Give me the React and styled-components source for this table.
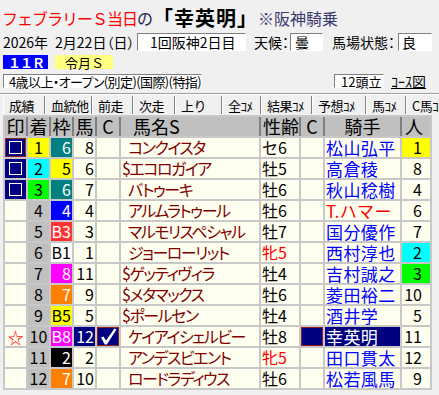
import React from "react"
import styled, { createGlobalStyle } from "styled-components"

const GlobalStyle = createGlobalStyle`
  body {
    margin: 0;
    background: #f0f0f0;
    font-family: "Noto Sans CJK JP", "Noto Sans", sans-serif;
    color: #000;
  }
`

const COLS = "21px 21px 21px 21px 22px 138px 38px 22px 75px 28px"
const NAVY = "#000080"

const Page = styled.div`
  width: 439px;
  height: 395px;
  overflow: hidden;
  display: flex;
  flex-direction: column;
`

const Title = styled.div`
  height: 31px;
  display: flex;
  align-items: center;
  padding-left: 2px;
  padding-top: 4px;
  box-sizing: border-box;
  white-space: nowrap;
  font-size: 16px;
`

const TitleRed = styled.span`
  color: #ff0000;
  letter-spacing: -1px;
`

const TitleDark = styled.span`
  color: #222255;
`

const TitleBold = styled.span`
  font-size: 20px;
  font-weight: bold;
  letter-spacing: 1px;
`

const TitleNote = styled.span`
  color: #3a3a70;
`

const InfoRow = styled.div`
  display: flex;
  align-items: center;
  height: ${p => p.h}px;
  margin-top: ${p => p.mt}px;
  font-size: ${p => p.fs}px;
  white-space: nowrap;
  line-height: 1;
`

const Label = styled.span`
  width: ${p => p.w}px;
  padding-left: ${p => p.pl || 0}px;
  box-sizing: border-box;
  font-feature-settings: "palt";
`

const Sunken = styled.span`
  display: flex;
  align-items: center;
  height: 100%;
  width: ${p => p.w}px;
  padding-left: ${p => p.pl || 0}px;
  margin-left: ${p => p.ml || 0}px;
  box-sizing: border-box;
  background: #fff;
  border-top: 1px solid #808080;
  border-left: 1px solid #808080;
  border-right: 1px solid #fff;
  border-bottom: 1px solid #fff;
  letter-spacing: ${p => p.ls || 0}px;
  font-feature-settings: ${p => (p.palt ? '"palt"' : "normal")};
`

const RaceNo = styled.span`
  display: flex;
  align-items: center;
  height: 100%;
  width: 45px;
  margin-left: 3px;
  padding-left: 5px;
  box-sizing: border-box;
  background: #0000ff;
  color: #fff;
  font-weight: bold;
  letter-spacing: -1px;
`

const RaceName = styled.span`
  display: flex;
  align-items: center;
  height: 100%;
  width: 58px;
  margin-left: 7px;
  padding-left: 10px;
  box-sizing: border-box;
  background: #ffff80;
`

const RightGroup = styled.div`
  margin-left: auto;
  width: 105px;
  display: flex;
  align-items: center;
  height: 100%;
`

const CourseLink = styled.span`
  margin-left: 7px;
  font-size: 14px;
  text-decoration: underline;
`

const Separator = styled.div`
  margin-top: 5px;
  height: 0;
  border-top: 1px solid #a0a0a0;
  border-bottom: 1px solid #fff;
`

const TabBar = styled.div`
  display: flex;
  height: 18px;
  margin-top: 1px;
  padding-left: 3px;
  white-space: nowrap;
  overflow: hidden;
`

const Tab = styled.div`
  flex: none;
  width: ${p => p.w}px;
  box-sizing: border-box;
  display: flex;
  align-items: center;
  padding-left: 5px;
  font-size: 13px;
  letter-spacing: -0.5px;
  border-left: 1px solid #fff;
  border-right: 1px solid #808080;
  box-shadow: 1px 0 0 #404040;
`

const Table = styled.div`
  margin-top: 1px;
  margin-left: 3px;
  width: max-content;
  display: flex;
  flex-direction: column;
  gap: 2px;
  padding: 2px;
  background: #c8c8c8;
`

const Row = styled.div`
  display: grid;
  grid-template-columns: ${COLS};
  gap: 2px;
  background: ${p => (p.head ? "#808080" : "transparent")};
`

const HeadCell = styled.div`
  height: 19px;
  line-height: 19px;
  text-align: ${p => p.align || "center"};
  padding-left: ${p => p.pl || 0}px;
  background: #c0c0c0;
  font-size: 18px;
  white-space: nowrap;
`

const Cell = styled.div`
  height: 19px;
  line-height: 19px;
  text-align: ${p => p.align || "left"};
  padding-left: ${p => p.pl || 0}px;
  padding-right: ${p => p.pr || 0}px;
  background: ${p => p.bg || "#fffff0"};
  color: ${p => p.fg || "#000"};
  font-size: ${p => p.fs || 16}px;
  letter-spacing: ${p => p.ls || 0}px;
  box-shadow: ${p => (p.focus ? "inset 0 0 0 1px #902020" : "none")};
  white-space: nowrap;
`

const IconCell = styled(Cell)`
  display: flex;
  align-items: center;
  justify-content: center;
`

const HorseName = styled(Cell)`
  color: #800000;
  font-size: 16px;
  letter-spacing: -1.5px;
  font-feature-settings: "palt";
`

const MarkBox = styled.span`
  width: 11px;
  height: 11px;
  border: 1px solid #fff;
`

const Star = styled.span`
  color: #ff0000;
  font-size: 16px;
  line-height: 1;
`

const Check = () => (
  <svg width="20" height="19" viewBox="0 0 20 19">
    <path d="M3 10.5 L5.5 9.5 L8 13.5 L16.5 1.5 L18.5 2.5 L8.8 17.5 L6.8 17.5 Z" fill="#fff" />
  </svg>
)

const Y = "#ffff00"
const CY = "#00ffff"
const LM = "#00ff00"
const GR = "#c0c0c0"
const TEAL = "#008080"
const BLUE = "#0000ff"
const RED = "#ff3333"
const PINK = "#ff00ff"
const ORANGE = "#ff8000"

const rows = [
  { mark: "box", focus: true, rank: 1, rankBg: Y, waku: "6", wBg: TEAL, wFg: "#fff", uma: 8, name: "コンクイスタ", sex: "セ6", jockey: "松山弘平", pop: 1, popBg: Y },
  { mark: "box", rank: 2, rankBg: CY, waku: "5", wBg: Y, wFg: "#000", uma: 6, name: "$エコロガイア", sex: "牡5", jockey: "高倉稜", pop: 8 },
  { mark: "box", rank: 3, rankBg: LM, waku: "6", wBg: TEAL, wFg: "#fff", uma: 7, name: "バトゥーキ", sex: "牡6", jockey: "秋山稔樹", pop: 4 },
  { rank: 4, waku: "4", wBg: BLUE, wFg: "#fff", uma: 4, name: "アルムラトゥール", sex: "牡6", jockey: "T.ハマー", jFg: "#ff0000", pop: 6 },
  { rank: 5, waku: "B3", wBg: RED, wFg: "#fff", uma: 3, name: "マルモリスペシャル", sex: "牡7", jockey: "国分優作", pop: 7 },
  { rank: 6, waku: "B1", wBg: "#fff", wFg: "#000", uma: 1, name: "ジョーローリット", sex: "牝5", sFg: "#ff0000", jockey: "西村淳也", pop: 2, popBg: CY },
  { rank: 7, waku: "8", wBg: PINK, wFg: "#fff", uma: 11, name: "$ゲッティヴィラ", sex: "牡4", jockey: "吉村誠之", pop: 3, popBg: LM },
  { rank: 8, waku: "7", wBg: ORANGE, wFg: "#fff", uma: 9, name: "$メタマックス", sex: "牡6", jockey: "菱田裕二", pop: 10 },
  { rank: 9, waku: "B5", wBg: Y, wFg: "#000", uma: 5, name: "$ポールセン", sex: "牡4", jockey: "酒井学", pop: 5 },
  { mark: "star", rank: 10, waku: "B8", wBg: PINK, wFg: "#fff", uma: 12, mine: true, name: "ケイアイシェルビー", sex: "牡8", jockey: "幸英明", pop: 11 },
  { rank: 11, waku: "2", wBg: "#000", wFg: "#fff", uma: 2, name: "アンデスビエント", sex: "牝5", sFg: "#ff0000", jockey: "田口貫太", pop: 12 },
  { rank: 12, waku: "7", wBg: ORANGE, wFg: "#fff", uma: 10, name: "ロードラディウス", sex: "牡6", jockey: "松若風馬", pop: 9 },
]

const tabs = [
  ["成績", 42], ["血統他", 47], ["前走", 41], ["次走", 42], ["上り", 47],
  ["全ｺﾒ", 39], ["結果ｺﾒ", 51], ["予想ｺﾒ", 54], ["馬ｺﾒ", 40], ["C馬ｺﾒ", 50],
]

const HorseRow = ({ r }) => {
  const dollar = r.name.startsWith("$")
  return (
    <Row>
      <IconCell bg={r.mark === "box" ? NAVY : undefined} focus={r.focus}>
        {r.mark === "box" && <MarkBox />}
        {r.mark === "star" && <Star>☆</Star>}
      </IconCell>
      <Cell align="center" bg={r.rankBg || GR}>{r.rank}</Cell>
      <Cell align="right" pr={1} bg={r.wBg} fg={r.wFg}>{r.waku}</Cell>
      <Cell align="right" pr={1} bg={r.mine ? NAVY : undefined} fg={r.mine ? "#fff" : "#000"}>{r.uma}</Cell>
      <IconCell bg={r.mine ? NAVY : undefined} focus={r.mine}>{r.mine && <Check />}</IconCell>
      <HorseName pl={dollar ? 1 : 7}>{r.name}</HorseName>
      <Cell pl={1} fg={r.sFg || "#000"}>{r.sex}</Cell>
      <Cell bg={r.mine ? NAVY : undefined} focus={r.mine} />
      <Cell pl={1} fs={17} ls={0.4} bg={r.mine ? NAVY : undefined} fg={r.mine ? "#fff" : r.jFg || "#0000ff"}>{r.jockey}</Cell>
      <Cell align="right" pr={8} bg={r.popBg}>{r.pop}</Cell>
    </Row>
  )
}

export default function App() {
  return (
    <Page>
      <GlobalStyle />
      <Title>
        <TitleRed>フェブラリーＳ当日</TitleRed>
        <TitleDark>の</TitleDark>
        <TitleBold>「幸英明」</TitleBold>
        <TitleNote>※阪神騎乗</TitleNote>
      </Title>

      <InfoRow h={18} mt={2} fs={14}>
        <Label w={137} pl={3}>2026年&ensp;2月22日（日）</Label>
        <Sunken w={109} pl={12}>1回阪神2日目</Sunken>
        <Label w={44} pl={8}>天候：</Label>
        <Sunken w={33} pl={4}>曇</Sunken>
        <Label w={75} pl={9}>馬場状態：</Label>
        <Sunken w={34} pl={3}>良</Sunken>
      </InfoRow>

      <InfoRow h={14} mt={4} fs={13}>
        <RaceNo>１１Ｒ</RaceNo>
        <RaceName>令月Ｓ</RaceName>
      </InfoRow>

      <InfoRow h={14} mt={5} fs={13}>
        <Sunken w={199} pl={5} ml={3} ls={-0.6} palt>4歳以上・オープン(別定)(国際)(特指)</Sunken>
        <RightGroup>
          <Sunken w={50} pl={6}>12頭立</Sunken>
          <CourseLink>ｺｰｽ図</CourseLink>
        </RightGroup>
      </InfoRow>

      <Separator />

      <TabBar>
        {tabs.map(([t, w]) => (
          <Tab key={t} w={w}>{t}</Tab>
        ))}
      </TabBar>

      <Table>
        <Row head>
          <HeadCell>印</HeadCell>
          <HeadCell>着</HeadCell>
          <HeadCell>枠</HeadCell>
          <HeadCell>馬</HeadCell>
          <HeadCell>C</HeadCell>
          <HeadCell align="left" pl={12}>馬名S</HeadCell>
          <HeadCell align="left" pl={2}>性齢</HeadCell>
          <HeadCell>C</HeadCell>
          <HeadCell>騎手</HeadCell>
          <HeadCell align="left" pl={3}>人</HeadCell>
        </Row>
        {rows.map(r => (
          <HorseRow key={r.rank} r={r} />
        ))}
      </Table>
    </Page>
  )
}
